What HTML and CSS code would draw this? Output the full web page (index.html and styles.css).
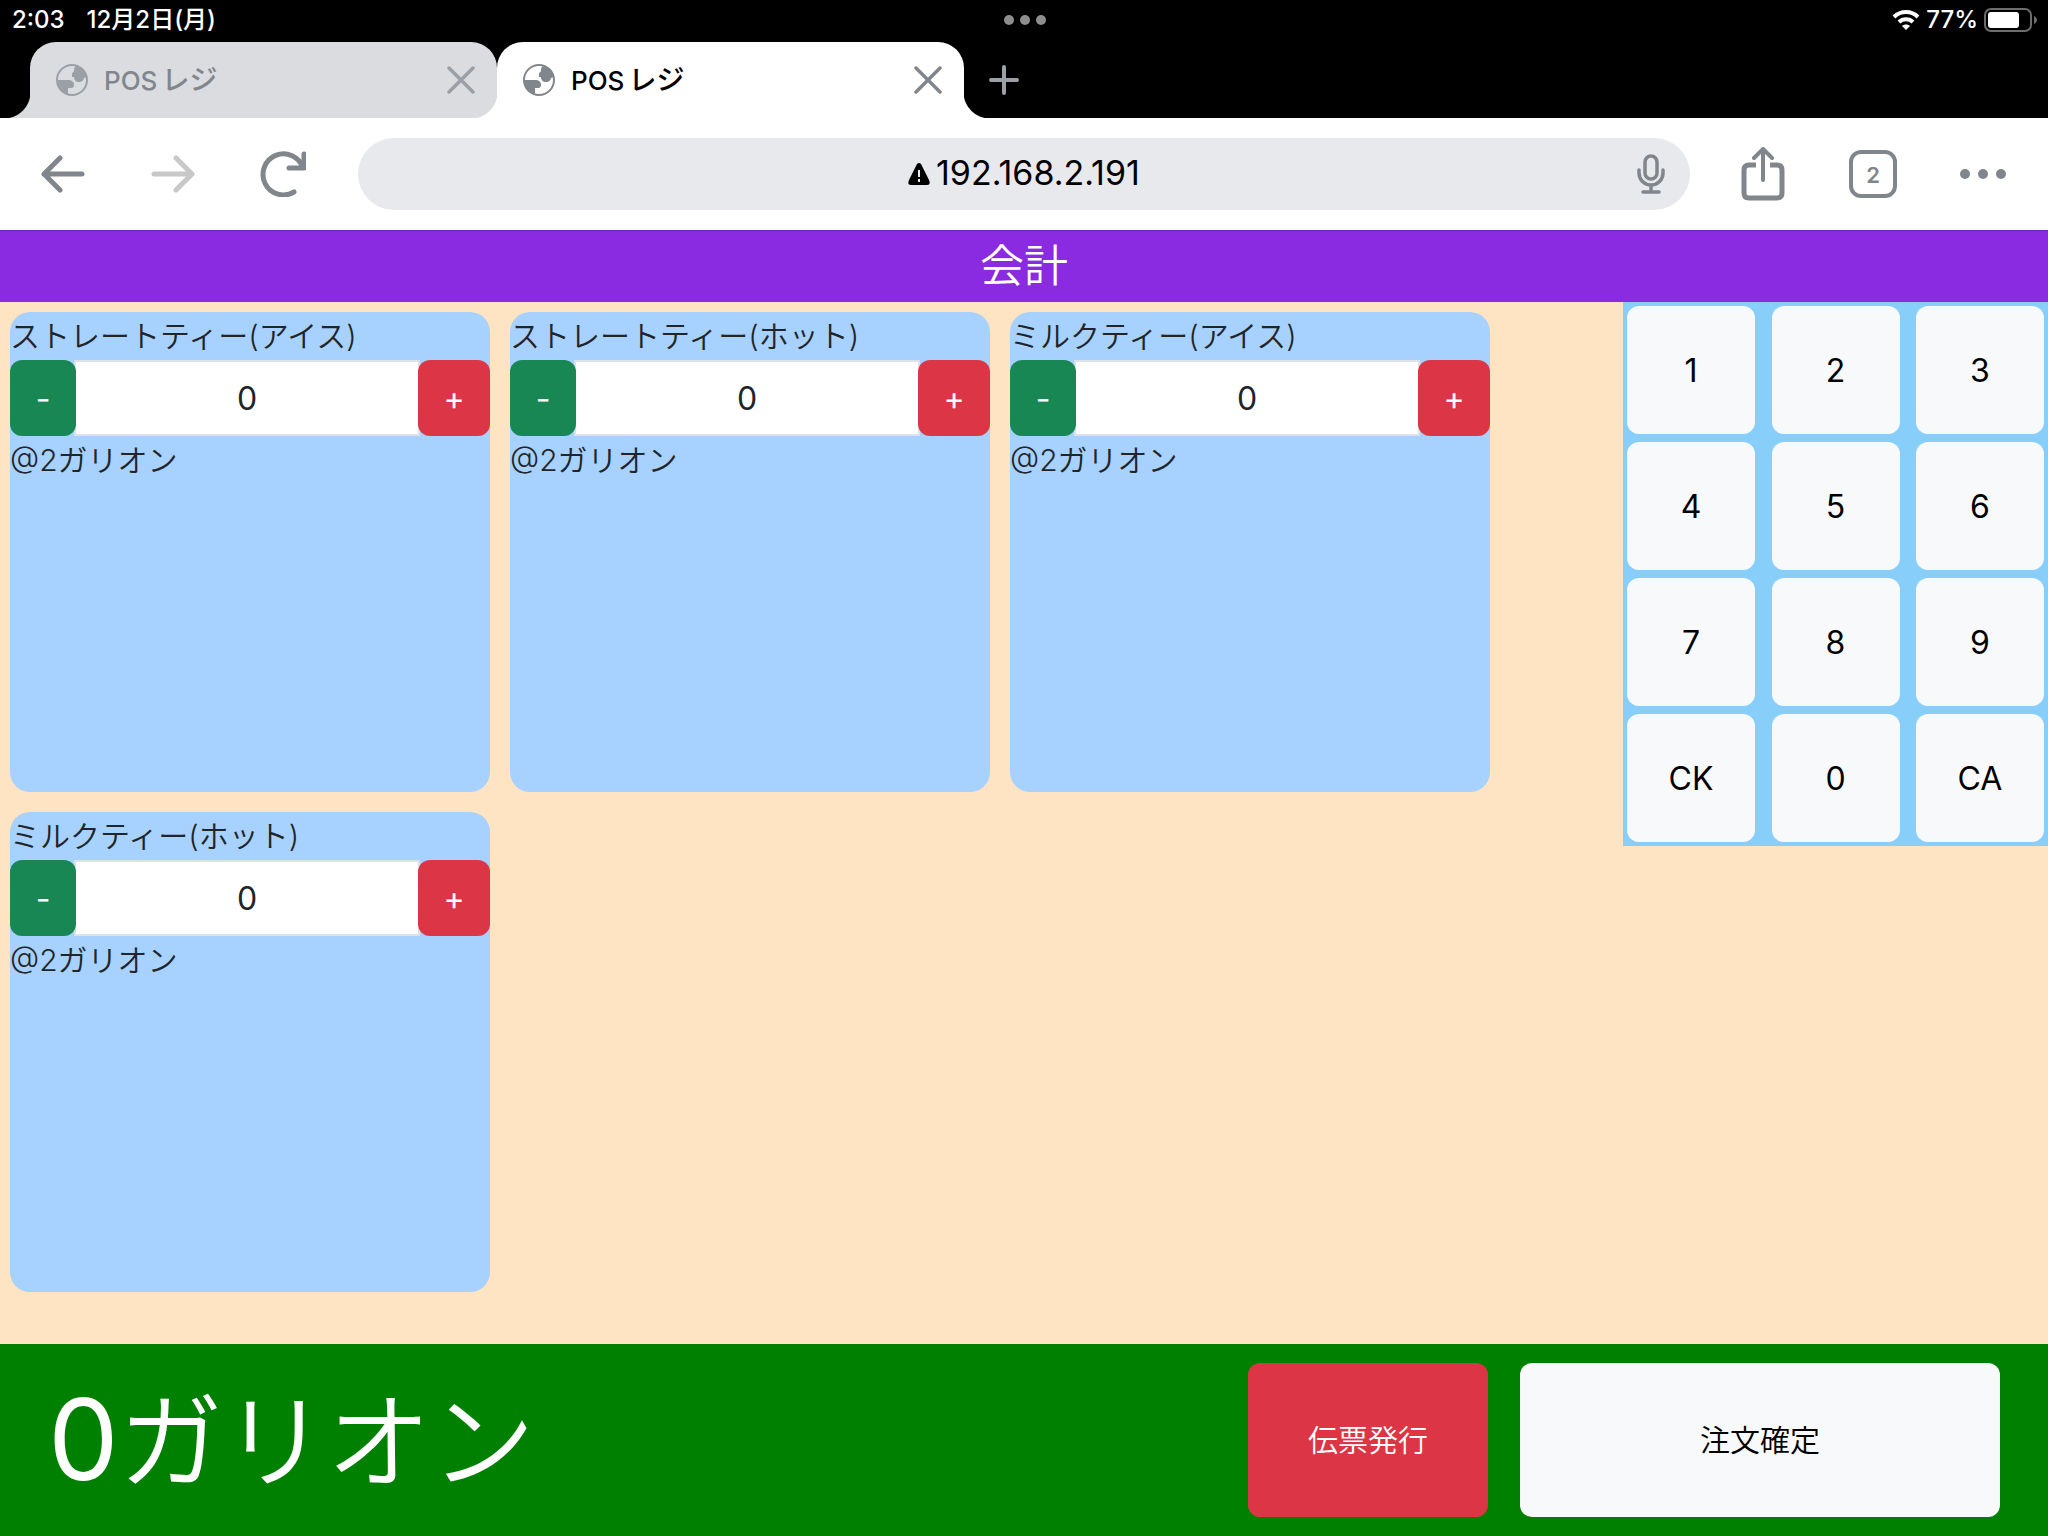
FILE: index.html
```html
<!DOCTYPE html>
<html lang="ja">
<head>
  <meta charset="utf-8">
  <title>POSレジ</title>
  <link rel="stylesheet" href="styles.css">
</head>
<body>
  <svg class="symbols" aria-hidden="true">
    <symbol id="globe" viewBox="0 0 32 32">
      <circle cx="16" cy="16" r="15" fill="none" stroke="currentColor" stroke-width="2"/>
      <path d="M20 2c-2 1-2 3-2 5 0 1-2 1-2 3v3h2c0 3 2 5 5 5s5-2 5-4l3-1C30 6 26 3 20 2z" fill="currentColor"/>
      <path d="M1 16h11c4 0 6 2 6 5 0 2-1 3-3 3h-3v6C5 29 1 23 1 16z" fill="currentColor"/>
    </symbol>
    <symbol id="close" viewBox="0 0 28 28">
      <path d="M2 2l24 24M26 2L2 26" fill="none" stroke="currentColor" stroke-width="3.5" stroke-linecap="round"/>
    </symbol>
  </svg>

  <div class="status-bar">
    <div class="status-left"><span>2:03</span><span>12月2日(月)</span></div>
    <svg class="status-dots" width="42" height="10" viewBox="0 0 42 10"><circle cx="5" cy="5" r="5"/><circle cx="21" cy="5" r="5"/><circle cx="37" cy="5" r="5"/></svg>
    <div class="status-right">
      <svg width="28" height="20" viewBox="0 0 28 20">
        <path d="M2 7a17 17 0 0 1 24 0M7 12a10 10 0 0 1 14 0" fill="none" stroke="#fff" stroke-width="4"/>
        <path d="M14 20l-4-4c2-2 6-2 8 0z" fill="#fff"/>
      </svg>
      <span>77%</span>
      <svg width="54" height="24" viewBox="0 0 54 24">
        <rect x="1" y="1" width="46" height="22" rx="6" fill="none" stroke="#6c6c6c" stroke-width="2"/>
        <rect x="4" y="4" width="31" height="16" rx="3" fill="#fff"/>
        <path d="M50 8c4 2 4 6 0 8z" fill="#6c6c6c"/>
      </svg>
    </div>
  </div>

  <div class="tab-strip">
    <div class="tab">
      <svg class="tab-icon"><use href="#globe"/></svg>
      <span class="tab-title">POS<span class="kana">レジ</span></span>
      <button class="tab-close" aria-label="閉じる"><svg><use href="#close"/></svg></button>
    </div>
    <div class="tab active">
      <svg class="tab-icon"><use href="#globe"/></svg>
      <span class="tab-title">POS<span class="kana">レジ</span></span>
      <button class="tab-close" aria-label="閉じる"><svg><use href="#close"/></svg></button>
    </div>
    <button class="new-tab" aria-label="新しいタブ">
      <svg width="30" height="30" viewBox="0 0 30 30"><path d="M15 2v26M2 15h26" fill="none" stroke="currentColor" stroke-width="4" stroke-linecap="round"/></svg>
    </button>
  </div>

  <div class="toolbar">
    <button class="tool" aria-label="戻る">
      <svg width="46" height="38" viewBox="0 0 46 38"><path d="M42 19H4M20 3L4 19l16 16" fill="none" stroke="currentColor" stroke-width="5" stroke-linecap="round" stroke-linejoin="round"/></svg>
    </button>
    <button class="tool" aria-label="進む" disabled>
      <svg width="46" height="38" viewBox="0 0 46 38"><path d="M4 19h38M26 3l16 16-16 16" fill="none" stroke="currentColor" stroke-width="5" stroke-linecap="round" stroke-linejoin="round"/></svg>
    </button>
    <button class="tool" aria-label="再読み込み">
      <svg width="46" height="46" viewBox="0 0 46 46"><path d="M34 41A20.5 20.5 0 1 1 43 17M44 3v14H29" fill="none" stroke="currentColor" stroke-width="5" stroke-linecap="round" stroke-linejoin="round"/></svg>
    </button>
    <div class="address">
      <svg class="warning" width="22" height="22" viewBox="0 0 22 22">
        <path d="M9 1q2-2 4 0l8 16q2 5-2 5H3q-4 0-2-5z" fill="#000"/>
        <path d="M11 7v7M11 16v3" stroke="#e8e9ed" stroke-width="2"/>
      </svg>
      <input type="text" class="url" value="192.168.2.191" aria-label="アドレス">
      <button class="mic" aria-label="音声検索">
        <svg width="28" height="40" viewBox="0 0 28 40"><path d="M14 2a6 6 0 0 1 6 6v11a6 6 0 0 1-12 0V8a6 6 0 0 1 6-6zM2 16v3a12 12 0 0 0 24 0v-3M14 31v6M6 38h16" fill="none" stroke="currentColor" stroke-width="3.5" stroke-linecap="round"/></svg>
      </button>
    </div>
    <button class="tool" aria-label="共有">
      <svg width="44" height="54" viewBox="0 0 44 54"><path d="M15 18H8q-5 0-5 5v23q0 5 5 5h28q5 0 5-5V23q0-5-5-5h-7" fill="none" stroke="currentColor" stroke-width="5"/><path d="M22 33V3M13 11l9-9 9 9" fill="none" stroke="currentColor" stroke-width="4" stroke-linecap="round" stroke-linejoin="round"/></svg>
    </button>
    <button class="tool" aria-label="タブ一覧"><span class="tab-count">2</span></button>
    <button class="tool" aria-label="メニュー">
      <svg width="46" height="10" viewBox="0 0 46 10" fill="currentColor"><circle cx="5" cy="5" r="5"/><circle cx="23" cy="5" r="5"/><circle cx="41" cy="5" r="5"/></svg>
    </button>
  </div>

  <h1 class="title">会計</h1>

  <main class="main">
    <div class="products">
      <div class="product">
        <label for="item1">ストレートティー(アイス)</label>
        <div class="quantity">
          <button class="minus">-</button>
          <input type="text" id="item1" value="0">
          <button class="plus">+</button>
        </div>
        <p class="price">@2ガリオン</p>
      </div>
      <div class="product">
        <label for="item2">ストレートティー(ホット)</label>
        <div class="quantity">
          <button class="minus">-</button>
          <input type="text" id="item2" value="0">
          <button class="plus">+</button>
        </div>
        <p class="price">@2ガリオン</p>
      </div>
      <div class="product">
        <label for="item3">ミルクティー(アイス)</label>
        <div class="quantity">
          <button class="minus">-</button>
          <input type="text" id="item3" value="0">
          <button class="plus">+</button>
        </div>
        <p class="price">@2ガリオン</p>
      </div>
      <div class="product">
        <label for="item4">ミルクティー(ホット)</label>
        <div class="quantity">
          <button class="minus">-</button>
          <input type="text" id="item4" value="0">
          <button class="plus">+</button>
        </div>
        <p class="price">@2ガリオン</p>
      </div>
    </div>

    <div class="keypad">
      <button>1</button>
      <button>2</button>
      <button>3</button>
      <button>4</button>
      <button>5</button>
      <button>6</button>
      <button>7</button>
      <button>8</button>
      <button>9</button>
      <button>CK</button>
      <button>0</button>
      <button>CA</button>
    </div>
  </main>

  <footer class="footer">
    <div class="total"><span>0</span>ガリオン</div>
    <button class="btn slip">伝票発行</button>
    <button class="btn confirm">注文確定</button>
  </footer>
</body>
</html>
```
FILE: styles.css
```css
* {
  box-sizing: border-box;
}
body {
  margin: 0;
  min-height: 100vh;
  display: flex;
  flex-direction: column;
  background-color: bisque;
  color: #212529;
  font-family: Inter, "Noto Sans CJK JP", sans-serif;
  font-size: 32px;
  line-height: 48px;
}
button, input {
  font: inherit;
  color: inherit;
  margin: 0;
  padding: 0;
  border: none;
  background: none;
}
button {
  cursor: pointer;
}
svg {
  display: block;
}
.symbols {
  position: absolute;
  width: 0;
  height: 0;
}

/* status bar */
.status-bar {
  display: grid;
  grid-template-columns: 1fr auto 1fr;
  align-items: center;
  height: 42px;
  padding: 0 10px 2px 12px;
  background-color: #000;
  color: #fff;
  font-size: 24px;
  font-weight: 500;
  line-height: 40px;
}
.status-left {
  display: flex;
  gap: 22px;
}
.status-dots {
  fill: #8e8e8e;
}
.status-right {
  display: flex;
  justify-content: flex-end;
  align-items: center;
  gap: 6px;
}

/* tabs */
.tab-strip {
  display: flex;
  height: 76px;
  padding-left: 30px;
  background-color: #000;
}
.tab {
  position: relative;
  flex: 0 1 467px;
  display: flex;
  align-items: center;
  padding: 0 22px 0 26px;
  border-radius: 26px 26px 0 0;
  background-color: #dadce0;
  color: #9aa0a6;
  font-size: 26px;
  font-weight: 500;
}
.tab::before, .tab.active::after {
  content: "";
  position: absolute;
  bottom: 0;
  left: -26px;
  width: 26px;
  height: 26px;
  background: radial-gradient(circle at 0 0, transparent 26px, #dadce0 27px);
}
.tab.active::before {
  background: radial-gradient(circle at 0 0, transparent 26px, #fff 27px);
}
.tab.active::after {
  left: 100%;
  background: radial-gradient(circle at 100% 0, transparent 26px, #fff 27px);
}
.tab.active {
  background-color: #fff;
  color: #80868b;
}
.tab-icon {
  width: 32px;
  height: 32px;
  margin-right: 16px;
}
.tab-title {
  flex: 1;
  color: #80868b;
}
.active .tab-title {
  color: #000;
}
.kana {
  margin-left: 4px;
  font-size: 28px;
}
.tab-close svg {
  width: 28px;
  height: 28px;
}
.new-tab {
  width: 80px;
  display: flex;
  align-items: center;
  justify-content: center;
  color: #9aa0a6;
}

/* toolbar */
.toolbar {
  display: flex;
  align-items: center;
  height: 112px;
  padding: 0 10px 0 8px;
  background-color: #fff;
  color: #80868b;
}
.tool {
  flex: 0 0 110px;
  height: 80px;
  display: flex;
  align-items: center;
  justify-content: center;
}
.tool:disabled {
  color: #c8c8c8;
}
.address {
  position: relative;
  flex: 1;
  display: flex;
  align-items: center;
  justify-content: center;
  gap: 6px;
  height: 72px;
  margin: 0 18px 0 20px;
  border-radius: 36px;
  background-color: #e8e9ed;
}
.url {
  width: 204px;
  padding-bottom: 2px;
  color: #000;
  font-size: 34px;
}
.mic {
  position: absolute;
  right: 25px;
}
.tab-count {
  width: 48px;
  height: 48px;
  border: 4px solid currentColor;
  border-radius: 12px;
  font-size: 22px;
  font-weight: 600;
  line-height: 42px;
}

/* register */
.title {
  margin: 0;
  height: 72px;
  border-top: 1px solid #6f22b6;
  background-color: blueviolet;
  color: #fff;
  font-size: 44px;
  font-weight: 350;
  line-height: 71px;
  text-align: center;
}
.main {
  flex: 1;
  display: flex;
  align-items: flex-start;
}
.products {
  flex: 1;
  display: flex;
  flex-wrap: wrap;
  gap: 20px;
  padding: 10px;
}
.product {
  width: 480px;
  height: 480px;
  border-radius: 20px;
  background-color: #a7d2ff;
}
.product label {
  display: block;
  font-size: 30px;
  font-weight: 350;
}
.quantity {
  display: flex;
  height: 76px;
}
.quantity input {
  flex: 1;
  min-width: 0;
  margin: 0 -2px;
  padding-top: 2px;
  border: 2px solid #dee2e6;
  background-color: #fff;
  text-align: center;
}
.quantity button {
  position: relative;
  padding-top: 2px;
  border-radius: 12px;
  color: #fff;
}
.quantity .minus {
  width: 66px;
  background-color: #198754;
}
.quantity .plus {
  width: 72px;
  background-color: #dc3545;
}
.price {
  margin: 0;
  font-size: 30px;
  font-weight: 350;
}
.keypad {
  width: 425px;
  display: grid;
  grid-template-columns: repeat(3, 128px);
  justify-content: space-between;
  row-gap: 8px;
  padding: 4px;
  background-color: lightskyblue;
}
.keypad button {
  height: 128px;
  padding-top: 2px;
  border-radius: 12px;
  background-color: #f8f9fa;
  color: #000;
}

/* total and actions */
.footer {
  display: flex;
  align-items: center;
  gap: 32px;
  height: 192px;
  padding: 0 48px;
  background-color: green;
}
.total {
  flex: 1;
  color: #fff;
  font-size: 104px;
  font-weight: 350;
  line-height: 192px;
}
.total span {
  font-size: 112px;
  font-weight: 400;
}
.btn {
  height: 154px;
  border-radius: 12px;
  font-size: 30px;
  font-weight: 350;
}
.slip {
  width: 240px;
  background-color: #dc3545;
  color: #fff;
}
.confirm {
  width: 480px;
  background-color: #f8f9fa;
  color: #000;
}
```
